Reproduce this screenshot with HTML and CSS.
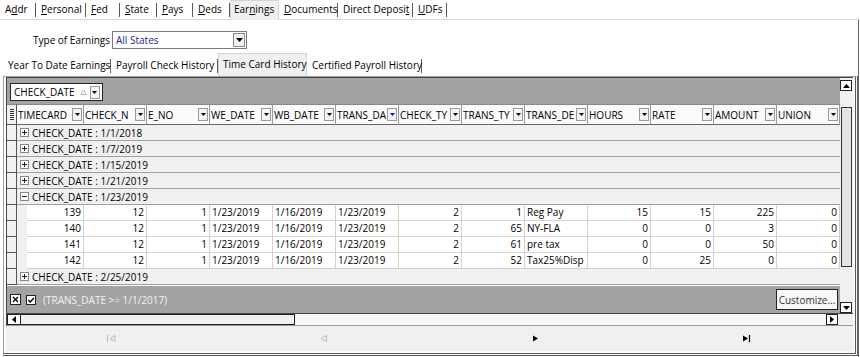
FILE: index.html
```html
<!DOCTYPE html>
<html lang="en">
<head>
    <meta charset="UTF-8">
    <meta name="viewport" content="width=device-width, initial-scale=1.0">
    <link rel="stylesheet" href="styles.css">
    <title>Earnings</title>
</head>
<body>
    <div class="tabs main-tabs">
        <div class="tab">A<u>d</u>dr</div>
        <div class="tab"><u>P</u>ersonal</div>
        <div class="tab"><u>F</u>ed</div>
        <div class="tab"><u>S</u>tate</div>
        <div class="tab"><u>P</u>ays</div>
        <div class="tab"><u>D</u>eds</div>
        <div class="tab active">Ear<u>n</u>ings</div>
        <div class="tab"><u>D</u>ocuments</div>
        <div class="tab">Direct Deposi<u>t</u></div>
        <div class="tab"><u>U</u>DFs</div>
    </div>

    <div class="panel">
        <div class="earn-type">
            <span class="label">Type of Earnings</span>
            <div class="combo">
                <span class="combo-text">All States</span>
                <span class="combo-btn"><svg width="7" height="4" viewBox="0 0 7 4"><path d="M0 0h7L3.5 4z" fill="#000"/></svg></span>
            </div>
        </div>

        <div class="tabs sub-tabs">
            <div class="tab">Year To Date Earnings</div>
            <div class="tab">Payroll Check History</div>
            <div class="tab active">Time Card History</div>
            <div class="tab">Certified Payroll History</div>
        </div>

        <div class="frame">
            <div class="grid-wrap">
                <div class="grid-top">
                    <div class="grid-main">
                        <div class="group-panel">
                            <div class="group-chip">
                                CHECK_DATE
                                <svg class="sort" width="7" height="6" viewBox="0 0 7 6"><path d="M3.5 0.8L6.3 5.5H0.7z" fill="none" stroke="#b4b4b4"/></svg>
                                <span class="dd"><svg width="5" height="3" viewBox="0 0 5 3"><path d="M0 0h5L2.5 3z" fill="#000"/></svg></span>
                            </div>
                        </div>

                        <div class="hdr">
                            <div class="ind grip"><svg width="4" height="11" viewBox="0 0 4 11"><path d="M0 0.5h4M0 2.5h4M0 4.5h4M0 6.5h4M0 8.5h4M0 10.5h4" stroke="#333" stroke-width="1"/></svg></div>
                            <div class="hcell"><span class="htext">TIMECARD</span><span class="dd"><svg width="5" height="3" viewBox="0 0 5 3"><path d="M0 0h5L2.5 3z" fill="#000"/></svg></span></div>
                            <div class="hcell"><span class="htext">CHECK_N</span><span class="dd"><svg width="5" height="3" viewBox="0 0 5 3"><path d="M0 0h5L2.5 3z" fill="#000"/></svg></span></div>
                            <div class="hcell"><span class="htext">E_NO</span><span class="dd"><svg width="5" height="3" viewBox="0 0 5 3"><path d="M0 0h5L2.5 3z" fill="#000"/></svg></span></div>
                            <div class="hcell"><span class="htext">WE_DATE</span><span class="dd"><svg width="5" height="3" viewBox="0 0 5 3"><path d="M0 0h5L2.5 3z" fill="#000"/></svg></span></div>
                            <div class="hcell"><span class="htext">WB_DATE</span><span class="dd"><svg width="5" height="3" viewBox="0 0 5 3"><path d="M0 0h5L2.5 3z" fill="#000"/></svg></span></div>
                            <div class="hcell"><span class="htext">TRANS_DA</span><span class="dd"><svg width="5" height="3" viewBox="0 0 5 3"><path d="M0 0h5L2.5 3z" fill="#1010d0"/></svg></span></div>
                            <div class="hcell"><span class="htext">CHECK_TY</span><span class="dd"><svg width="5" height="3" viewBox="0 0 5 3"><path d="M0 0h5L2.5 3z" fill="#000"/></svg></span></div>
                            <div class="hcell"><span class="htext">TRANS_TY</span><span class="dd"><svg width="5" height="3" viewBox="0 0 5 3"><path d="M0 0h5L2.5 3z" fill="#000"/></svg></span></div>
                            <div class="hcell"><span class="htext">TRANS_DE</span><span class="dd"><svg width="5" height="3" viewBox="0 0 5 3"><path d="M0 0h5L2.5 3z" fill="#000"/></svg></span></div>
                            <div class="hcell"><span class="htext">HOURS</span><span class="dd"><svg width="5" height="3" viewBox="0 0 5 3"><path d="M0 0h5L2.5 3z" fill="#000"/></svg></span></div>
                            <div class="hcell"><span class="htext">RATE</span><span class="dd"><svg width="5" height="3" viewBox="0 0 5 3"><path d="M0 0h5L2.5 3z" fill="#000"/></svg></span></div>
                            <div class="hcell"><span class="htext">AMOUNT</span><span class="dd"><svg width="5" height="3" viewBox="0 0 5 3"><path d="M0 0h5L2.5 3z" fill="#000"/></svg></span></div>
                            <div class="hcell"><span class="htext">UNION</span><span class="dd"><svg width="5" height="3" viewBox="0 0 5 3"><path d="M0 0h5L2.5 3z" fill="#000"/></svg></span></div>
                        </div>

                        <div class="grp">
                            <div class="ind"></div>
                            <div class="grp-body"><svg class="exp" width="9" height="9" viewBox="0 0 9 9"><rect x="0.5" y="0.5" width="8" height="8" fill="#fff" stroke="#8a8a8a"/><path d="M2 4.5h5M4.5 2v5" stroke="#222"/></svg>CHECK_DATE : 1/1/2018</div>
                        </div>
                        <div class="grp">
                            <div class="ind"></div>
                            <div class="grp-body"><svg class="exp" width="9" height="9" viewBox="0 0 9 9"><rect x="0.5" y="0.5" width="8" height="8" fill="#fff" stroke="#8a8a8a"/><path d="M2 4.5h5M4.5 2v5" stroke="#222"/></svg>CHECK_DATE : 1/7/2019</div>
                        </div>
                        <div class="grp">
                            <div class="ind"></div>
                            <div class="grp-body"><svg class="exp" width="9" height="9" viewBox="0 0 9 9"><rect x="0.5" y="0.5" width="8" height="8" fill="#fff" stroke="#8a8a8a"/><path d="M2 4.5h5M4.5 2v5" stroke="#222"/></svg>CHECK_DATE : 1/15/2019</div>
                        </div>
                        <div class="grp">
                            <div class="ind"></div>
                            <div class="grp-body"><svg class="exp" width="9" height="9" viewBox="0 0 9 9"><rect x="0.5" y="0.5" width="8" height="8" fill="#fff" stroke="#8a8a8a"/><path d="M2 4.5h5M4.5 2v5" stroke="#222"/></svg>CHECK_DATE : 1/21/2019</div>
                        </div>
                        <div class="grp">
                            <div class="ind"></div>
                            <div class="grp-body"><svg class="exp" width="9" height="9" viewBox="0 0 9 9"><rect x="0.5" y="0.5" width="8" height="8" fill="#fff" stroke="#8a8a8a"/><path d="M2 4.5h5" stroke="#222"/></svg>CHECK_DATE : 1/23/2019</div>
                        </div>

                        <div class="data">
                            <div class="ind"></div><div class="indent"></div>
                            <div class="c r">139</div><div class="c r">12</div><div class="c r">1</div>
                            <div class="c">1/23/2019</div><div class="c">1/16/2019</div><div class="c">1/23/2019</div>
                            <div class="c r">2</div><div class="c r">1</div><div class="c">Reg Pay</div>
                            <div class="c r">15</div><div class="c r">15</div><div class="c r">225</div><div class="c r">0</div>
                        </div>
                        <div class="data">
                            <div class="ind"></div><div class="indent"></div>
                            <div class="c r">140</div><div class="c r">12</div><div class="c r">1</div>
                            <div class="c">1/23/2019</div><div class="c">1/16/2019</div><div class="c">1/23/2019</div>
                            <div class="c r">2</div><div class="c r">65</div><div class="c">NY-FLA</div>
                            <div class="c r">0</div><div class="c r">0</div><div class="c r">3</div><div class="c r">0</div>
                        </div>
                        <div class="data">
                            <div class="ind"></div><div class="indent"></div>
                            <div class="c r">141</div><div class="c r">12</div><div class="c r">1</div>
                            <div class="c">1/23/2019</div><div class="c">1/16/2019</div><div class="c">1/23/2019</div>
                            <div class="c r">2</div><div class="c r">61</div><div class="c">pre tax</div>
                            <div class="c r">0</div><div class="c r">0</div><div class="c r">50</div><div class="c r">0</div>
                        </div>
                        <div class="data">
                            <div class="ind"></div><div class="indent"></div>
                            <div class="c r">142</div><div class="c r">12</div><div class="c r">1</div>
                            <div class="c">1/23/2019</div><div class="c">1/16/2019</div><div class="c">1/23/2019</div>
                            <div class="c r">2</div><div class="c r">52</div><div class="c">Tax25%Disp</div>
                            <div class="c r">0</div><div class="c r">25</div><div class="c r">0</div><div class="c r">0</div>
                        </div>

                        <div class="grp">
                            <div class="ind"></div>
                            <div class="grp-body"><svg class="exp" width="9" height="9" viewBox="0 0 9 9"><rect x="0.5" y="0.5" width="8" height="8" fill="#fff" stroke="#8a8a8a"/><path d="M2 4.5h5M4.5 2v5" stroke="#222"/></svg>CHECK_DATE : 2/25/2019</div>
                        </div>

                        <div class="filter-bar">
                            <svg class="fbox" width="11" height="11" viewBox="0 0 11 11"><rect x="0.5" y="0.5" width="10" height="10" fill="#fff" stroke="#222"/><path d="M3 3l5 5M8 3l-5 5" stroke="#000" stroke-width="1.3"/></svg>
                            <svg class="fbox" width="10" height="10" viewBox="0 0 10 10"><rect x="0.5" y="0.5" width="9" height="9" fill="#fff" stroke="#222"/><path d="M2.3 5l2 2 3.5-4" fill="none" stroke="#000" stroke-width="1.4"/></svg>
                            <span class="filter-text">(TRANS_DATE &gt;= 1/1/2017)</span>
                            <button class="customize">Customize...</button>
                        </div>
                    </div>

                    <div class="vscroll">
                        <div class="sbtn"><svg width="7" height="4" viewBox="0 0 7 4"><path d="M0 4h7L3.5 0z" fill="#000"/></svg></div>
                        <div class="vthumb"></div>
                        <div class="sbtn"><svg width="7" height="4" viewBox="0 0 7 4"><path d="M0 0h7L3.5 4z" fill="#000"/></svg></div>
                    </div>
                </div>

                <div class="hscroll">
                    <div class="hthumb">
                        <span class="hbtn-l"><svg width="4" height="7" viewBox="0 0 4 7"><path d="M4 0v7L0 3.5z" fill="#000"/></svg></span>
                    </div>
                    <div class="htrack"></div>
                    <div class="hbtn-r"><svg width="4" height="7" viewBox="0 0 4 7"><path d="M0 0v7L4 3.5z" fill="#000"/></svg></div>
                    <div class="corner"></div>
                </div>
            </div>

            <div class="nav">
                <div class="nav-item"><svg width="9" height="7" viewBox="0 0 9 7"><path d="M0.5 0v7" stroke="#b8b8b8"/><path d="M8 0.5L3 3.5 8 6.5z" fill="none" stroke="#b8b8b8"/></svg></div>
                <div class="nav-item"><svg width="7" height="7" viewBox="0 0 7 7"><path d="M6.5 0.5L1 3.5 6.5 6.5z" fill="none" stroke="#b8b8b8"/></svg></div>
                <div class="nav-item"><svg width="5" height="7" viewBox="0 0 5 7"><path d="M0 0.5L5 3.5 0 6.5z" fill="#000"/></svg></div>
                <div class="nav-item"><svg width="8" height="7" viewBox="0 0 8 7"><path d="M0 0.5L5 3.5 0 6.5z" fill="#000"/><path d="M6.5 0v7" stroke="#000" stroke-width="1.2"/></svg></div>
            </div>
        </div>
    </div>
</body>
</html>
```

FILE: styles.css
```css
* {
    box-sizing: border-box;
}

body {
    margin: 0;
    width: 860px;
    height: 357px;
    overflow: hidden;
    background-color: #fff;
    font-family: "Open Sans", "Noto Sans", sans-serif;
    font-size: 10px;
    color: #000;
}

/* tab strips */
.tabs {
    display: grid;
}

.tab {
    padding-left: 5px;
    white-space: nowrap;
    background: linear-gradient(#5a5a5a, #5a5a5a) right 3px / 1px 14px no-repeat;
}

.tab.active {
    background: #f0f0f0;
    border: 1px solid #d4d4d4;
    border-bottom: none;
    position: relative;
    z-index: 1;
}

.main-tabs {
    grid-template-columns: 36px 50px 34px 37px 36px 37px 49px 59px 75px 34px;
    height: 19px;
    line-height: 19px;
}

.main-tabs .tab.active {
    height: 20px;
    line-height: 17px;
    padding-left: 3px;
}

.panel {
    width: 859px;
    height: 338px;
    border-top: 1px solid #d9d9d9;
    border-right: 1px solid #6a6a6a;
}

.earn-type {
    display: flex;
    align-items: center;
    margin-top: 10px;
    padding-left: 33px;
    height: 19px;
}

.label {
    width: 79px;
    white-space: nowrap;
}

.combo {
    display: flex;
    align-items: center;
    width: 135px;
    height: 18px;
    border: 1px solid #7a7a7a;
    background-color: #fff;
}

.combo-text {
    flex: 1;
    padding-left: 3px;
    color: #24249a;
}

.combo-btn {
    display: flex;
    align-items: center;
    justify-content: center;
    width: 12px;
    height: 14px;
    margin-right: 1px;
    border: 1px solid #8a8a8a;
    background-color: #f0f0f0;
}

.sub-tabs {
    grid-template-columns: 108px 107px 89px 115px;
    margin-top: 6px;
    margin-left: 3px;
    height: 21px;
    line-height: 21px;
}

.sub-tabs .tab {
    padding-left: 5px;
    background-position: right 4px;
}

.sub-tabs .tab.active {
    margin-top: -2px;
    height: 23px;
    line-height: 21px;
    padding-left: 4px;
}

/* grid frame */
.frame {
    margin-left: 3px;
    width: 855px;
    height: 280px;
    border-top: 1px solid #a0a0a0;
    border-left: 1px solid #a0a0a0;
    border-right: 3px double #5a5a5a;
    border-bottom: 3px double #5a5a5a;
    padding-left: 2px;
    background-color: #fafafa;
}

.grid-wrap {
    width: 847px;
    border-left: 1px solid #444;
    border-top: 1px solid #444;
}

.grid-top {
    display: flex;
}

.grid-main {
    width: 833px;
}

.group-panel {
    height: 26px;
    background-color: #a3a3a3;
    padding: 5px 0 0 3px;
}

.group-chip {
    display: inline-flex;
    align-items: center;
    height: 18px;
    padding: 0 2px 0 3px;
    border: 1px solid #222;
    background-color: #fff;
}

.sort {
    margin: 0 3px 0 5px;
}

.dd {
    display: inline-flex;
    align-items: center;
    justify-content: center;
    flex: none;
    width: 10px;
    height: 13px;
    border: 1px solid #9a9a9a;
    background-color: #f4f4f4;
}

.hdr {
    display: grid;
    grid-template-columns: 10px 67px repeat(12, 63px);
    height: 21px;
    background-color: #a3a3a3;
}

.ind {
    background-color: #f0f0f0;
    border-right: 1px solid #555;
    border-bottom: 1px solid #555;
}

.grip {
    display: flex;
    align-items: center;
    justify-content: center;
    border-top: 1px solid #888;
}

.hcell {
    display: flex;
    align-items: center;
    padding: 0 1px 0 1px;
    background-color: #fbfbfb;
    border-top: 1px solid #888;
    border-right: 1px solid #9a9a9a;
    border-bottom: 1px solid #666;
}

.htext {
    flex: 1;
    white-space: nowrap;
}

.grp {
    display: flex;
    height: 16px;
}

.grp .ind {
    width: 10px;
}

.grp-body {
    flex: 1;
    display: flex;
    align-items: center;
    padding-left: 3px;
    background-color: #f0f0f0;
    border-bottom: 1px solid #a0a0a0;
    white-space: nowrap;
}

.exp {
    margin-right: 3px;
}

.data {
    display: grid;
    grid-template-columns: 10px 10px 57px repeat(12, 63px);
    height: 16px;
}

.indent {
    background-color: #f0f0f0;
}

.c {
    padding: 0 2px;
    line-height: 15px;
    background-color: #fff;
    border-right: 1px solid #d2d2d2;
    border-bottom: 1px solid #d2d2d2;
    white-space: nowrap;
}

.c.r {
    text-align: right;
}

.filter-bar {
    display: flex;
    align-items: center;
    height: 27px;
    margin-top: 1px;
    padding-left: 3px;
    background-color: #a3a3a3;
}

.fbox {
    margin-right: 5px;
}

.filter-text {
    flex: 1;
    margin-left: 2px;
    color: #f2f2f2;
}

.customize {
    align-self: flex-start;
    margin: 3px 2px 0 0;
    height: 21px;
    width: 62px;
    padding: 0;
    border: 1px solid #222;
    background-color: #f7f7f7;
    font-family: inherit;
    font-size: 10px;
    color: #333;
}

/* scrollbars */
.vscroll {
    width: 13px;
    display: flex;
    flex-direction: column;
    background-color: #f0f0f0;
    padding-top: 2px;
}

.sbtn {
    display: flex;
    align-items: center;
    justify-content: center;
    width: 12px;
    height: 11px;
    border: 1px solid #222;
    background-color: #fff;
}

.vthumb {
    margin: 16px 0 auto 1px;
    width: 11px;
    height: 160px;
    border: 1px solid #333;
    background-color: #e4e4e4;
}

.hscroll {
    display: flex;
    height: 13px;
    border-top: 1px solid #444;
    border-bottom: 1px solid #9a9a9a;
}

.hthumb {
    width: 288px;
    border: 1px solid #222;
    background-color: #f0f0f0;
}

.hbtn-l {
    display: flex;
    align-items: center;
    justify-content: center;
    width: 13px;
    height: 100%;
    border-right: 1px solid #222;
    background-color: #fff;
}

.htrack {
    flex: 1;
    background-color: #f8f8f8;
}

.hbtn-r {
    display: flex;
    align-items: center;
    justify-content: center;
    width: 12px;
    border: 1px solid #222;
    background-color: #fff;
}

.corner {
    width: 15px;
    background-color: #f0f0f0;
}

.nav {
    display: grid;
    grid-template-columns: repeat(4, 1fr);
    width: 847px;
    height: 25px;
    background-color: #f0f0f0;
}

.nav-item {
    display: flex;
    align-items: center;
    justify-content: center;
}
```
